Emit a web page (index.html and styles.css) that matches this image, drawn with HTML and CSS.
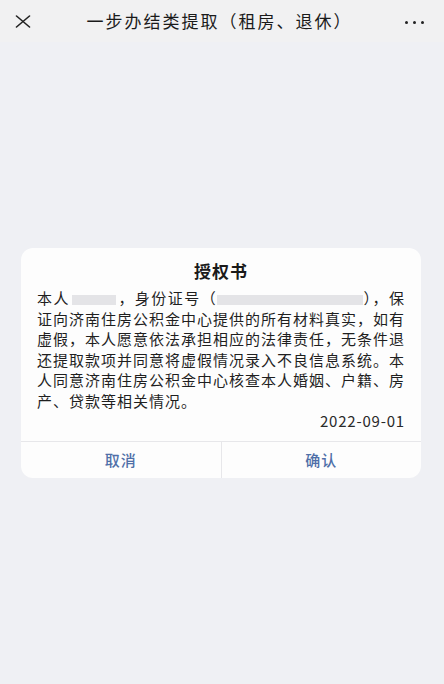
FILE: index.html
```html
<!DOCTYPE html>
<html lang="zh-CN">
<head>
<meta charset="utf-8">
<title>一步办结类提取（租房、退休）</title>
<link rel="stylesheet" href="styles.css">
</head>
<body>
<div class="app">
  <header class="navbar">
    <span class="nav-close">
      <svg width="16" height="13" viewBox="0 0 16 13"><path d="M1.5 1 L14.5 12 M14.5 1 L1.5 12" stroke="#222" stroke-width="1.6" stroke-linecap="round" fill="none"/></svg>
    </span>
    <h1 class="nav-title">一步办结类提取（租房、退休）</h1>
    <span class="nav-more"><i></i><i></i><i></i></span>
  </header>
  <main class="stage">
    <section class="dialog">
      <div class="dialog-body">
        <h2 class="dialog-title">授权书</h2>
        <div class="dialog-text">
          <div class="line">本人<span class="blank blank-name"></span>，身份证号（<span class="blank blank-id"></span>），保</div>
          <div class="line">证向济南住房公积金中心提供的所有材料真实，如有</div>
          <div class="line">虚假，本人愿意依法承担相应的法律责任，无条件退</div>
          <div class="line">还提取款项并同意将虚假情况录入不良信息系统。本</div>
          <div class="line">人同意济南住房公积金中心核查本人婚姻、户籍、房</div>
          <div class="line last">产、贷款等相关情况。</div>
          <div class="date">2022-09-01</div>
        </div>
      </div>
      <div class="dialog-actions">
        <button class="btn">取消</button>
        <button class="btn">确认</button>
      </div>
    </section>
  </main>
</div>
</body>
</html>
```

FILE: styles.css
```css
* { box-sizing: border-box; }
html, body { margin: 0; padding: 0; }
body {
  width: 444px;
  height: 684px;
  background: #eff0f4;
  font-family: "Noto Sans CJK SC", "Noto Sans", sans-serif;
  color: #1c1c1c;
  overflow: hidden;
}
.app {
  height: 684px;
  display: flex;
  flex-direction: column;
}
.navbar {
  height: 42px;
  flex: none;
  background: #f1f1f2;
  display: flex;
  align-items: center;
  justify-content: space-between;
  padding: 0 20px 0 14px;
}
.nav-close { display: flex; width: 18px; justify-content: center; }
.nav-title {
  margin: 0;
  font-size: 17px;
  letter-spacing: 2px;
  font-weight: 400;
  color: #1a1a1a;
  line-height: 24px;
  transform: translateX(1px);
}
.nav-more { display: flex; gap: 5px; width: 19px; padding-top: 2px; }
.nav-more i {
  width: 3px; height: 3px; border-radius: 50%;
  background: #222;
  display: block;
}
.stage {
  flex: 1;
  display: flex;
  align-items: center;
  padding-left: 21px;
}
.dialog {
  width: 400px;
  background: #fdfdfd;
  border-radius: 12px;
  overflow: hidden;
}
.dialog-body {
  padding: 11px 16px 9px 16px;
}
.dialog-title {
  margin: 0 0 5px;
  text-align: center;
  font-size: 17px;
  letter-spacing: 1px;
  line-height: 24px;
  font-weight: 700;
  color: #1a1a1a;
}
.dialog-text {
  font-size: 15px;
  letter-spacing: 1px;
  line-height: 20.6px;
  color: #1f1f1f;
}
.line {
  text-align: justify;
  text-align-last: justify;
  white-space: nowrap;
}
.line.last { text-align-last: left; }
.blank {
  display: inline-block;
  height: 10px;
  background: #e4e4e7;
  vertical-align: -1px;
}
.blank-name { width: 44px; margin: 0 2px; }
.blank-id { width: 146px; }
.date {
  text-align: right;
  color: #2a2a2a;
  letter-spacing: 0.8px;
}
.dialog-actions {
  display: flex;
  border-top: 1px solid #e7e7ea;
  height: 37px;
}
.btn {
  flex: 1;
  border: 0;
  background: transparent;
  font-family: inherit;
  font-size: 15px;
  letter-spacing: 1px;
  color: #4f6fa8;
  font-weight: 500;
  padding: 0;
  line-height: 36px;
}
.btn + .btn { border-left: 1px solid #e7e7ea; }
```
